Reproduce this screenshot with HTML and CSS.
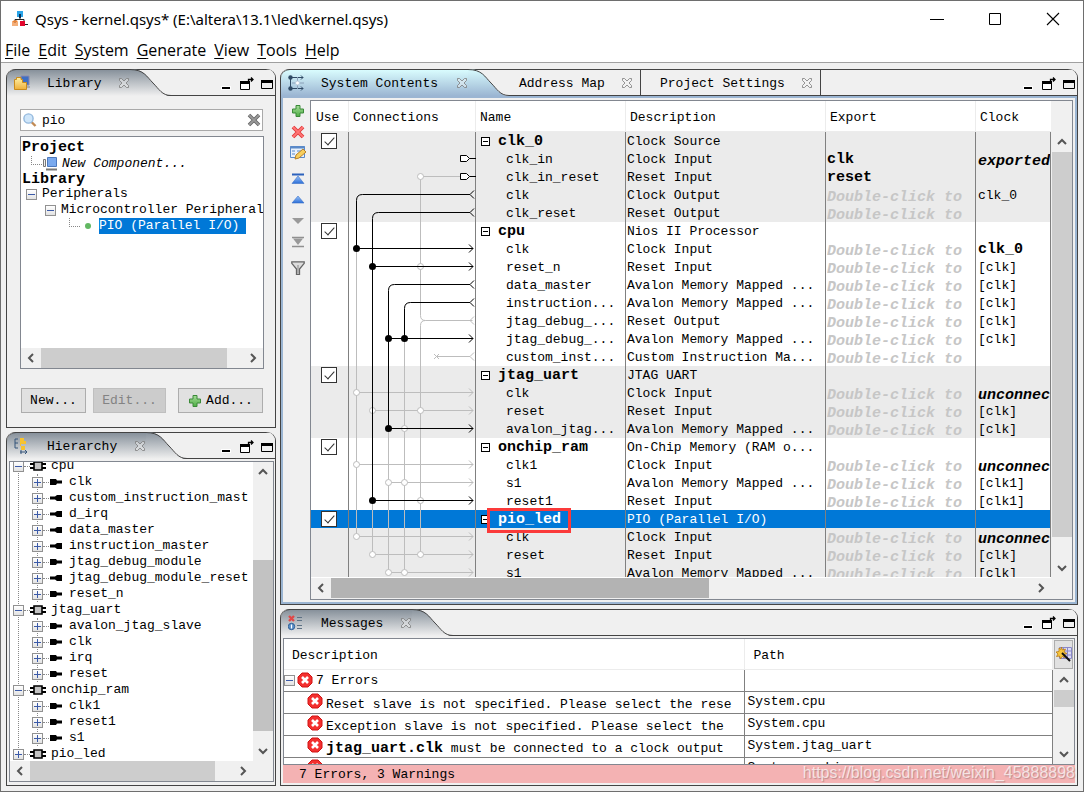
FILE: index.html
```html
<!DOCTYPE html>
<html lang="en">
<head>
<meta charset="utf-8">
<title>Qsys - kernel.qsys*</title>
<link rel="stylesheet" href="styles.css">
</head>
<body>
<svg class="defs" aria-hidden="true">
  <defs>
    <linearGradient id="gray" x1="0" y1="0" x2="0" y2="1"><stop offset="0" stop-color="#87919b"/><stop offset="1" stop-color="#f0f0f0"/></linearGradient>
    <linearGradient id="blue" x1="0" y1="0" x2="0" y2="1"><stop offset="0" stop-color="#d9fcfe"/><stop offset="1" stop-color="#9bb5d2"/></linearGradient>
    <linearGradient id="green" x1="0" y1="0" x2="0" y2="1"><stop offset="0" stop-color="#a5dc98"/><stop offset="1" stop-color="#4fae45"/></linearGradient>
    <linearGradient id="sky" x1="0" y1="0" x2="0" y2="1"><stop offset="0" stop-color="#9cc4f8"/><stop offset="1" stop-color="#2c6fd8"/></linearGradient>
    <linearGradient id="gold" x1="0" y1="0" x2="0" y2="1"><stop offset="0" stop-color="#fff2a8"/><stop offset="1" stop-color="#eeb03a"/></linearGradient>
    <symbol id="close" viewBox="0 0 12 12"><path d="M1.500 1.500h2L6 4 8.500 1.500h2v2L8 6l2.500 2.500v2h-2L6 8l-2.500 2.500h-2v-2L4 6 1.500 3.500z" fill="#f4f4f4" fill-opacity=".4" stroke="#7c7c7c" stroke-width=".8"/></symbol>
    <symbol id="min" viewBox="0 0 16 16"><path d="M2 10h10v4H2z" fill="#fff"/><path d="M3 11h8v2H3z" fill="#000"/></symbol>
    <symbol id="detach" viewBox="0 0 16 16"><path d="M1.500 5.500h9v8h-9z" fill="#fff" stroke="#000"/><path d="M1 6.500h10" stroke="#000" stroke-width="3"/><path d="M9.500 5V3.500H14M12 1.500l2 2-2 2" fill="none" stroke="#000" stroke-width="1.300"/></symbol>
    <symbol id="max" viewBox="0 0 16 16"><path d="M2.500 4.500h11v8h-11z" fill="#f0f0f0" stroke="#000"/><path d="M2 4h12v3H2z"/></symbol>
    <symbol id="left" viewBox="0 0 12 12"><path d="M8 2 4 6l4 4" fill="none" stroke="#555" stroke-width="2"/></symbol>
    <symbol id="right" viewBox="0 0 12 12"><path d="m4 2 4 4-4 4" fill="none" stroke="#555" stroke-width="2"/></symbol>
    <symbol id="up" viewBox="0 0 12 12"><path d="m2 8 4-4 4 4" fill="none" stroke="#555" stroke-width="2"/></symbol>
    <symbol id="down" viewBox="0 0 12 12"><path d="m2 4 4 4 4-4" fill="none" stroke="#555" stroke-width="2"/></symbol>
    <symbol id="plus" viewBox="0 0 14 14"><path d="M5 1.500h4V5h3.500v4H9v3.500H5V9H1.500V5H5z" fill="url(#green)" stroke="#3b8a38"/></symbol>
    <symbol id="error" viewBox="0 0 16 16"><path d="M5 1h6l4 4v6l-4 4H5l-4-4V5z" fill="#f3302f" stroke="#d01414"/><path d="m5 5 6 6M11 5l-6 6" stroke="#fff" stroke-width="2.600"/></symbol>
    <symbol id="chip" viewBox="0 0 16 12"><path d="M0 4h16M0 8h16" stroke="#000" stroke-width="2"/><path d="M4 2h8v8H4z" fill="#c4c4c4" stroke="#000" stroke-width="1.600"/></symbol>
    <symbol id="in" viewBox="0 0 12 8"><path d="M0 1h6l1 1.500h5v3H7L6 7H0z"/></symbol>
    <symbol id="out" viewBox="0 0 12 8"><path d="M12 1H7L5 2.500H0v3h5L7 7h5z"/></symbol>
    <symbol id="tail-gray" viewBox="0 0 41 27"><path d="M0 0C14 0 17 8 23 14S32 27 41 27H0z" fill="url(#gray)"/><path d="M0 .5C14 .5 17 8 23 14S32 26.500 41 26.500" fill="none" stroke="#444"/></symbol>
    <symbol id="tail-blue" viewBox="0 0 41 27"><path d="M0 0C14 0 17 8 23 14S32 27 41 27H0z" fill="url(#blue)"/><path d="M0 .5C14 .5 17 8 23 14S32 26.500 41 26.500" fill="none" stroke="#444"/></symbol>
  </defs>
</svg>

<div class="window">
  <header class="titlebar">
    <svg class="i16" viewBox="0 0 16 16"><path d="M8 5v4M3 12V8.500h9V12" fill="none" stroke="#222"/><path d="M5 0h6v6H5z" fill="#2aa4e8"/><path d="M7 3h2v4H7z" fill="#0b2f55"/><path d="M1 15v-5m0 1q2-2 2 0v4m0-4q2-2 2 0v4" fill="none" stroke="#ee8433" stroke-width="1.300"/><path d="M8 10h5v5H8z" fill="#e2062c"/><path d="M13 13.500h3" stroke="#222"/></svg>
    <h1>Qsys - kernel.qsys* (E:\altera\13.1\led\kernel.qsys)</h1>
    <div class="wincontrols">
      <button aria-label="Minimize"><svg viewBox="0 0 16 16"><path d="M1 8.500h14" stroke="#000"/></svg></button>
      <button aria-label="Maximize"><svg viewBox="0 0 16 16"><path d="M2.500 2.500h11v11h-11z" fill="none" stroke="#000"/></svg></button>
      <button aria-label="Close"><svg viewBox="0 0 16 16"><path d="m2 2 12 12M14 2 2 14" stroke="#000" stroke-width="1.100"/></svg></button>
    </div>
  </header>
  <nav class="menubar">
    <button><u>F</u>ile</button><button><u>E</u>dit</button><button><u>S</u>ystem</button><button><u>G</u>enerate</button><button><u>V</u>iew</button><button><u>T</u>ools</button><button><u>H</u>elp</button>
  </nav>

  <main class="workspace">
    <div class="side">
      <section class="panel library">
        <div class="tabs">
          <div class="tab tab-library">
            <svg class="i16" viewBox="0 0 16 16"><path d="M7 1h8v9H7z" fill="#3f6fc4" stroke="#88a"/><path d="M9 12h7" stroke="#888"/><path d="M.5 14.500v-10h2v-2H7v2h1.500v3h4v7z" fill="url(#gold)" stroke="#c98b1c"/></svg>
            <h2>Library</h2><button class="x" aria-label="Close Library"><svg><use href="#close"/></svg></button>
          </div>
          <svg class="tail"><use href="#tail-gray"/></svg>
          <div class="controls"><button aria-label="Minimize"><svg><use href="#min"/></svg></button><button aria-label="Detach"><svg><use href="#detach"/></svg></button><button aria-label="Maximize"><svg><use href="#max"/></svg></button></div>
        </div>
        <div class="library-body">
          <div class="search">
            <svg class="i14" viewBox="0 0 14 14"><path d="m8.500 9 4 4" stroke="#c18a54" stroke-width="2.400"/><circle cx="5.500" cy="5.500" r="4.600" fill="#cfe6fa" stroke="#93b8dd" stroke-width="1.400"/></svg>
            <input type="text" value="pio" aria-label="Search library">
            <button aria-label="Clear search"><svg class="i14" viewBox="0 0 14 14"><path d="m2 2 10 10M12 2 2 12" stroke="#666" stroke-width="3.600"/><path d="m2 2 10 10M12 2 2 12" stroke="#999" stroke-width="1.800"/></svg></button>
          </div>
          <div class="listbox">
            <ul class="lib-tree">
              <li class="strong">Project</li>
              <li class="lib-item lib-new"><span class="elbow"></span><svg class="i16" viewBox="0 0 16 16"><path d="M5.500 1.500h9v9h-9z" fill="#79a9ee" stroke="#4c78bd"/><path d="M1.500 3.500h2v7h-2z" fill="#eee" stroke="#777"/><path d="M4 13.500h11" stroke="#777" stroke-width="2"/></svg><em>New Component...</em></li>
              <li class="strong short">Library</li>
              <li class="lib-item lvl1"><button class="exp minus" aria-label="Collapse"></button><span>Peripherals</span></li>
              <li class="lib-item lvl2"><button class="exp minus" aria-label="Collapse"></button><span>Microcontroller Peripherals</span></li>
              <li class="lib-item lvl3"><span class="elbow"></span><span class="dot"></span><span class="selected">PIO (Parallel I/O)</span></li>
            </ul>
            <div class="hscroll"><button aria-label="Scroll left"><svg><use href="#left"/></svg></button><div class="track"><div class="thumb" style="width:92%"></div></div><button aria-label="Scroll right"><svg><use href="#right"/></svg></button></div>
          </div>
          <div class="actions">
            <button class="btn btn-new">New...</button><button class="btn btn-edit" disabled>Edit...</button><button class="btn btn-add"><svg class="i14"><use href="#plus"/></svg>Add...</button>
          </div>
        </div>
      </section>

      <section class="panel hierarchy">
        <div class="tabs">
          <div class="tab tab-hierarchy">
            <svg class="i16" viewBox="0 0 16 16"><path d="M4 1H1v9h3M1 5h3" fill="none" stroke="#34557a"/><path d="M6 0h4v3h2v3H7v2h4v4H7V8H6z" fill="#f7c32e"/><path d="M6 14h7M11 12l2 2-2 2M7 12v4" fill="none" stroke="#34557a"/></svg>
            <h2>Hierarchy</h2><button class="x" aria-label="Close Hierarchy"><svg><use href="#close"/></svg></button>
          </div>
          <svg class="tail"><use href="#tail-gray"/></svg>
          <div class="controls"><button aria-label="Minimize"><svg><use href="#min"/></svg></button><button aria-label="Detach"><svg><use href="#detach"/></svg></button><button aria-label="Maximize"><svg><use href="#max"/></svg></button></div>
        </div>
        <div class="tree-frame">
          <div class="tree-view">
            <ul class="tree">
              <li><div class="node"><button class="exp minus" aria-label="Collapse cpu"></button><svg class="chip"><use href="#chip"/></svg>cpu</div>
                <ul>
                  <li class="node"><button class="exp plus" aria-label="Expand"></button><svg class="port"><use href="#in"/></svg>clk</li>
                  <li class="node"><button class="exp plus" aria-label="Expand"></button><svg class="port"><use href="#out"/></svg>custom_instruction_mast</li>
                  <li class="node"><button class="exp plus" aria-label="Expand"></button><svg class="port"><use href="#out"/></svg>d_irq</li>
                  <li class="node"><button class="exp plus" aria-label="Expand"></button><svg class="port"><use href="#out"/></svg>data_master</li>
                  <li class="node"><button class="exp plus" aria-label="Expand"></button><svg class="port"><use href="#out"/></svg>instruction_master</li>
                  <li class="node"><button class="exp plus" aria-label="Expand"></button><svg class="port"><use href="#in"/></svg>jtag_debug_module</li>
                  <li class="node"><button class="exp plus" aria-label="Expand"></button><svg class="port"><use href="#out"/></svg>jtag_debug_module_reset</li>
                  <li class="node"><button class="exp plus" aria-label="Expand"></button><svg class="port"><use href="#in"/></svg>reset_n</li>
                </ul></li>
              <li><div class="node"><button class="exp minus" aria-label="Collapse jtag_uart"></button><svg class="chip"><use href="#chip"/></svg>jtag_uart</div>
                <ul>
                  <li class="node"><button class="exp plus" aria-label="Expand"></button><svg class="port"><use href="#in"/></svg>avalon_jtag_slave</li>
                  <li class="node"><button class="exp plus" aria-label="Expand"></button><svg class="port"><use href="#in"/></svg>clk</li>
                  <li class="node"><button class="exp plus" aria-label="Expand"></button><svg class="port"><use href="#in"/></svg>irq</li>
                  <li class="node"><button class="exp plus" aria-label="Expand"></button><svg class="port"><use href="#in"/></svg>reset</li>
                </ul></li>
              <li><div class="node"><button class="exp minus" aria-label="Collapse onchip_ram"></button><svg class="chip"><use href="#chip"/></svg>onchip_ram</div>
                <ul>
                  <li class="node"><button class="exp plus" aria-label="Expand"></button><svg class="port"><use href="#in"/></svg>clk1</li>
                  <li class="node"><button class="exp plus" aria-label="Expand"></button><svg class="port"><use href="#in"/></svg>reset1</li>
                  <li class="node"><button class="exp plus" aria-label="Expand"></button><svg class="port"><use href="#in"/></svg>s1</li>
                </ul></li>
              <li><div class="node"><button class="exp plus" aria-label="Expand pio_led"></button><svg class="chip"><use href="#chip"/></svg>pio_led</div></li>
            </ul>
          </div>
          <div class="vscroll"><button aria-label="Scroll up"><svg><use href="#up"/></svg></button><div class="track"><div class="thumb dark" style="margin-top:78px;height:66%"></div></div><button aria-label="Scroll down"><svg><use href="#down"/></svg></button></div>
          <div class="hscroll"><button aria-label="Scroll left"><svg><use href="#left"/></svg></button><div class="track"><div class="thumb" style="width:91%"></div></div><button aria-label="Scroll right"><svg><use href="#right"/></svg></button></div>
        </div>
      </section>
    </div>

    <div class="content">
      <section class="panel system">
        <div class="tabs">
          <div class="tab tab-system">
            <svg class="i16" viewBox="0 0 16 16"><path d="M2.500 2v12M2 2.500h13M2 13.500h13M13 .5l2 2-2 2M13 11.500l2 2-2 2" fill="none" stroke="#2f4a64"/><path d="M9.500 2v12M4 8h12" stroke="#8aa0b8"/><circle cx="2.500" cy="2.500" r="2.200" fill="#2f4a64"/><circle cx="2.500" cy="13.500" r="2.200" fill="#2f4a64"/><circle cx="9.500" cy="8" r="2" fill="#fff" stroke="#bcd"/></svg>
            <h2>System Contents</h2><button class="x" aria-label="Close System Contents"><svg><use href="#close"/></svg></button>
          </div>
          <svg class="tail"><use href="#tail-blue"/></svg>
          <div class="tab-idle tab-address"><h2>Address Map</h2><button class="x" aria-label="Close Address Map"><svg><use href="#close"/></svg></button></div>
          <div class="tab-idle tab-settings"><h2>Project Settings</h2><button class="x" aria-label="Close Project Settings"><svg><use href="#close"/></svg></button></div>
          <div class="controls"><button aria-label="Minimize"><svg><use href="#min"/></svg></button><button aria-label="Detach"><svg><use href="#detach"/></svg></button><button aria-label="Maximize"><svg><use href="#max"/></svg></button></div>
        </div>
        <div class="system-body">
          <div class="toolbar">
            <button aria-label="Add"><svg><use href="#plus"/></svg></button>
            <button aria-label="Remove"><svg viewBox="0 0 14 14"><path d="m2 2 10 10M12 2 2 12" stroke="#e03a3a" stroke-width="3.800"/><path d="m2 2 10 10M12 2 2 12" stroke="#ff7676" stroke-width="1.800"/></svg></button>
            <button aria-label="Edit"><svg class="wide" viewBox="0 0 16 16"><path d="M.5 1.500h14v11H.5z" fill="#e8f1fc" stroke="#5b8ac9"/><path d="M0 2.500h15" stroke="#5b8ac9" stroke-width="2"/><path d="M2 6h3M7 6h5M2 9h3" stroke="#5b8ac9"/><path d="m5 14 1-4 7-6 3 3-7 6z" fill="#f7cf5e" stroke="#b98127"/></svg></button>
            <span class="sep"></span>
            <button aria-label="Move to top"><svg viewBox="0 0 14 14"><path d="M1 2.500h12" stroke="#2c62bd" stroke-width="2"/><path d="m7 4 6 7.500H1z" fill="url(#sky)" stroke="#3a70c8" stroke-width=".6"/></svg></button>
            <button aria-label="Move up"><svg viewBox="0 0 14 14"><path d="m7 3 6 7H1z" fill="url(#sky)" stroke="#3a70c8" stroke-width=".6"/></svg></button>
            <button aria-label="Move down"><svg viewBox="0 0 14 14"><path d="m7 10 6-6H1z" fill="#9a9a9a"/></svg></button>
            <button aria-label="Move to bottom"><svg viewBox="0 0 14 14"><path d="M1 11.500h12M1 2.500h12" stroke="#909090" stroke-width="1.600"/><path d="m7 10 5-6.500H2z" fill="#999"/></svg></button>
            <span class="sep"></span>
            <button aria-label="Filter"><svg viewBox="0 0 14 14"><path d="M.8.8h12.400v1.500L8.500 8v5.500h-3V8L.8 2.300z" fill="#ddd" stroke="#666" stroke-width="1.300"/><path d="M7 4v8" stroke="#888"/></svg></button>
          </div>
          <div class="grid-frame">
            <div class="grid-view">
              <table class="grid">
                <colgroup><col class="c-use"><col class="c-conn"><col class="c-name"><col class="c-desc"><col class="c-exp"><col></colgroup>
                <thead><tr><th>Use</th><th>Connections</th><th>Name</th><th>Description</th><th>Export</th><th>Clock</th></tr></thead>
                <tbody>
                  <tr class="alt"><td class="use"><input type="checkbox" checked aria-label="Use clk_0"></td><td class="conn">
                    <svg class="wires" viewBox="349 132 128 446">
                      <g fill="none" stroke="#bdbdbd">
                        <path d="M356.500 248.500V536.500M372.500 500.500V554.500M388.500 428.500V572.500M404.500 338.500V572.500M420.500 176.500V315.500q0 5 5 5H472.500M425.500 320.500q-5 0-5 5V554.500M420.500 176.500H460"/>
                        <path d="M356.500 392.500H473M372.500 410.500H473M356.500 464.500H473M388.500 482.500H473M356.500 536.500H473M372.500 554.500H473M388.500 572.500H473M436.500 356.500H470"/>
                        <path d="m469 388.500 4 4-4 4m0 10 4 4-4 4m0 46 4 4-4 4m0 10 4 4-4 4m0 46 4 4-4 4m0 10 4 4-4 4m0 10 4 4-4 4M474 316.500l-4 4 4 4m0 28-4 4 4 4M434 354l5 5m0-5-5 5"/>
                      </g>
                      <g fill="none" stroke="#000">
                        <path d="M470 194.500H362.500q-6 0-6 6V248.500H473M470 212.500H378.500q-6 0-6 6V500.500H473M372.500 266.500H473M470 284.500H394.500q-6 0-6 6V428.500H473M388.500 338.500H473M470 302.500H410.500q-6 0-6 6V338.500"/>
                        <path d="M474 190.500l-4 4 4 4m0 10-4 4 4 4m0 64-4 4 4 4m0 10-4 4 4 4M469 244.500l4 4-4 4m0 10 4 4-4 4m0 64 4 4-4 4m0 82 4 4-4 4m0 64 4 4-4 4"/>
                        <path d="M460.500 155.500h6l3 3-3 3h-6zM469.500 158.500H476M460.500 173.500h6l3 3-3 3h-6zM469.500 176.500H476" fill="#fff"/>
                      </g>
                      <g fill="#000"><circle cx="356.500" cy="248.500" r="3.500"/><circle cx="372.500" cy="266.500" r="3.500"/><circle cx="388.500" cy="338.500" r="3.500"/><circle cx="404.500" cy="338.500" r="3.500"/><circle cx="388.500" cy="428.500" r="3.500"/><circle cx="372.500" cy="500.500" r="3.500"/></g>
                      <g fill="#fff" stroke="#bdbdbd"><circle cx="420.500" cy="176.500" r="3"/><circle cx="356.500" cy="392.500" r="3"/><circle cx="372.500" cy="410.500" r="3"/><circle cx="420.500" cy="410.500" r="3"/><circle cx="356.500" cy="464.500" r="3"/><circle cx="388.500" cy="482.500" r="3"/><circle cx="404.500" cy="482.500" r="3"/><circle cx="356.500" cy="536.500" r="3"/><circle cx="372.500" cy="554.500" r="3"/><circle cx="420.500" cy="554.500" r="3"/><circle cx="388.500" cy="572.500" r="3"/><circle cx="404.500" cy="572.500" r="3"/><circle cx="420.500" cy="266.500" r="3"/><circle cx="404.500" cy="428.500" r="3"/><circle cx="420.500" cy="500.500" r="3"/></g>
                      <path d="M417 266.500h7M401 428.500h7M417 500.500h7M372.500 405v11" stroke="#000"/>
                    </svg></td><td class="mod"><button class="fold" aria-label="Collapse clk_0"></button>clk_0</td><td>Clock Source</td><td></td><td></td></tr>
                  <tr class="alt"><td></td><td></td><td class="sub">clk_in</td><td>Clock Input</td><td class="set">clk</td><td class="lowcell"><div class="low">exported</div></td></tr>
                  <tr class="alt"><td></td><td></td><td class="sub">clk_in_reset</td><td>Reset Input</td><td class="set">reset</td><td></td></tr>
                  <tr class="alt"><td></td><td></td><td class="sub">clk</td><td>Clock Output</td><td class="lowcell"><div class="low hint">Double-click to</div></td><td>clk_0</td></tr>
                  <tr class="alt"><td></td><td></td><td class="sub">clk_reset</td><td>Reset Output</td><td class="lowcell"><div class="low hint">Double-click to</div></td><td></td></tr>
                  <tr><td class="use"><input type="checkbox" checked aria-label="Use cpu"></td><td></td><td class="mod"><button class="fold" aria-label="Collapse cpu"></button>cpu</td><td>Nios II Processor</td><td></td><td></td></tr>
                  <tr><td></td><td></td><td class="sub">clk</td><td>Clock Input</td><td class="lowcell"><div class="low hint">Double-click to</div></td><td class="set">clk_0</td></tr>
                  <tr><td></td><td></td><td class="sub">reset_n</td><td>Reset Input</td><td class="lowcell"><div class="low hint">Double-click to</div></td><td>[clk]</td></tr>
                  <tr><td></td><td></td><td class="sub">data_master</td><td>Avalon Memory Mapped ...</td><td class="lowcell"><div class="low hint">Double-click to</div></td><td>[clk]</td></tr>
                  <tr><td></td><td></td><td class="sub">instruction...</td><td>Avalon Memory Mapped ...</td><td class="lowcell"><div class="low hint">Double-click to</div></td><td>[clk]</td></tr>
                  <tr><td></td><td></td><td class="sub">jtag_debug_...</td><td>Reset Output</td><td class="lowcell"><div class="low hint">Double-click to</div></td><td>[clk]</td></tr>
                  <tr><td></td><td></td><td class="sub">jtag_debug_...</td><td>Avalon Memory Mapped ...</td><td class="lowcell"><div class="low hint">Double-click to</div></td><td>[clk]</td></tr>
                  <tr><td></td><td></td><td class="sub">custom_inst...</td><td>Custom Instruction Ma...</td><td class="lowcell"><div class="low hint">Double-click to</div></td><td></td></tr>
                  <tr class="alt"><td class="use"><input type="checkbox" checked aria-label="Use jtag_uart"></td><td></td><td class="mod"><button class="fold" aria-label="Collapse jtag_uart"></button>jtag_uart</td><td>JTAG UART</td><td></td><td></td></tr>
                  <tr class="alt"><td></td><td></td><td class="sub">clk</td><td>Clock Input</td><td class="lowcell"><div class="low hint">Double-click to</div></td><td class="lowcell"><div class="low">unconnec</div></td></tr>
                  <tr class="alt"><td></td><td></td><td class="sub">reset</td><td>Reset Input</td><td class="lowcell"><div class="low hint">Double-click to</div></td><td>[clk]</td></tr>
                  <tr class="alt"><td></td><td></td><td class="sub">avalon_jtag...</td><td>Avalon Memory Mapped ...</td><td class="lowcell"><div class="low hint">Double-click to</div></td><td>[clk]</td></tr>
                  <tr><td class="use"><input type="checkbox" checked aria-label="Use onchip_ram"></td><td></td><td class="mod"><button class="fold" aria-label="Collapse onchip_ram"></button>onchip_ram</td><td>On-Chip Memory (RAM o...</td><td></td><td></td></tr>
                  <tr><td></td><td></td><td class="sub">clk1</td><td>Clock Input</td><td class="lowcell"><div class="low hint">Double-click to</div></td><td class="lowcell"><div class="low">unconnec</div></td></tr>
                  <tr><td></td><td></td><td class="sub">s1</td><td>Avalon Memory Mapped ...</td><td class="lowcell"><div class="low hint">Double-click to</div></td><td>[clk1]</td></tr>
                  <tr><td></td><td></td><td class="sub">reset1</td><td>Reset Input</td><td class="lowcell"><div class="low hint">Double-click to</div></td><td>[clk1]</td></tr>
                  <tr class="active"><td class="use"><input type="checkbox" checked aria-label="Use pio_led"></td><td></td><td class="mod marked"><button class="fold" aria-label="Collapse pio_led"></button>pio_led<span class="marker"></span></td><td>PIO (Parallel I/O)</td><td></td><td></td></tr>
                  <tr class="alt"><td></td><td></td><td class="sub">clk</td><td>Clock Input</td><td class="lowcell"><div class="low hint">Double-click to</div></td><td class="lowcell"><div class="low">unconnec</div></td></tr>
                  <tr class="alt"><td></td><td></td><td class="sub">reset</td><td>Reset Input</td><td class="lowcell"><div class="low hint">Double-click to</div></td><td>[clk]</td></tr>
                  <tr class="alt"><td></td><td></td><td class="sub">s1</td><td>Avalon Memory Mapped ...</td><td class="lowcell"><div class="low hint">Double-click to</div></td><td>[clk]</td></tr>
                </tbody>
              </table>
            </div>
            <div class="vscroll"><button aria-label="Scroll up"><svg><use href="#up"/></svg></button><div class="track"><div class="thumb" style="height:95%"></div></div><button aria-label="Scroll down"><svg><use href="#down"/></svg></button></div>
            <div class="hscroll"><button aria-label="Scroll left"><svg><use href="#left"/></svg></button><div class="track"><div class="thumb darker" style="width:54%"></div></div><button aria-label="Scroll right"><svg><use href="#right"/></svg></button></div>
          </div>
        </div>
      </section>

      <section class="panel messages">
        <div class="tabs">
          <div class="tab tab-messages">
            <svg class="i16" viewBox="0 0 16 16"><path d="m1 1 5 5M6 1 1 6" stroke="#e04848" stroke-width="2.400"/><circle cx="3.500" cy="11.500" r="3.200" fill="#5c90c8" stroke="#2f5f96"/><path d="M3.500 9.500v4" stroke="#fff" stroke-width="1.200"/><path d="M9 2.500h5M9 5.500h5M9 10.500h5M9 13.500h5" stroke="#5d7184"/></svg>
            <h2>Messages</h2><button class="x" aria-label="Close Messages"><svg><use href="#close"/></svg></button>
          </div>
          <svg class="tail"><use href="#tail-gray"/></svg>
          <div class="controls"><button aria-label="Minimize"><svg><use href="#min"/></svg></button><button aria-label="Detach"><svg><use href="#detach"/></svg></button><button aria-label="Maximize"><svg><use href="#max"/></svg></button></div>
        </div>
        <div class="messages-body">
          <div class="msg-frame">
            <div class="msg-view">
              <table class="msgs">
                <colgroup><col class="m-desc"><col></colgroup>
                <thead><tr><th>Description</th><th>Path</th></tr></thead>
                <tbody>
                  <tr><td><div class="msg root"><button class="exp minus" aria-label="Collapse errors"></button><svg class="i16"><use href="#error"/></svg><span>7 Errors</span></div></td><td></td></tr>
                  <tr><td><div class="msg leaf"><svg class="i16"><use href="#error"/></svg><span>Reset slave is not specified. Please select the rese</span></div></td><td>System.cpu</td></tr>
                  <tr><td><div class="msg leaf"><svg class="i16"><use href="#error"/></svg><span>Exception slave is not specified. Please select the</span></div></td><td>System.cpu</td></tr>
                  <tr><td><div class="msg leaf"><svg class="i16"><use href="#error"/></svg><span><b>jtag_uart.clk</b> must be connected to a clock output</span></div></td><td>System.jtag_uart</td></tr>
                  <tr><td><div class="msg leaf"><svg class="i16"><use href="#error"/></svg><span></span></div></td><td>System.onchip_ram</td></tr>
                </tbody>
              </table>
            </div>
            <div class="msg-side">
              <button class="wizard" aria-label="Column settings"><svg class="i16" viewBox="0 0 16 16"><path d="M3.500 1.500h12v11h-12zM3.500 5h12M3.500 9h12M7.500 1.500v11M11.500 1.500v11" fill="#dcdcf6" stroke="#8a88c8"/><path d="m5.500 1 1 3 3-1-1.500 3 3 1.500-3 1 1 3-3-1-1.500 2.500-1-3-3 .5L2 8 0 6l3-.5L3 2l2 1.500z" fill="#f8c63c" stroke="#b87a12" stroke-width=".8"/><path d="m6 7 8 8" stroke="#111" stroke-width="2"/></svg></button>
              <div class="vscroll"><button aria-label="Scroll up"><svg><use href="#up"/></svg></button><div class="track"><div class="thumb" style="height:33%"></div></div><button aria-label="Scroll down"><svg><use href="#down"/></svg></button></div>
            </div>
          </div>
          <footer class="status">7 Errors, 3 Warnings<span class="watermark">https://blog.csdn.net/weixin_45888898</span></footer>
        </div>
      </section>
    </div>
  </main>
</div>
</body>
</html>
```

FILE: styles.css
```css
* { box-sizing: border-box; }
body {
  margin: 0;
  background: #f0f0f0;
  color: #000;
  font: 13px/16px "Liberation Mono", monospace;
}
button { margin: 0; padding: 0; border: 0; background: none; color: inherit; font: inherit; }
h1, h2, ul { margin: 0; padding: 0; font-weight: normal; list-style: none; }
svg { display: block; flex: none; }
.defs { position: absolute; width: 0; height: 0; }
.i16 { width: 16px; height: 16px; }
.i14 { width: 14px; height: 14px; }

.window {
  display: flex;
  flex-direction: column;
  height: 100vh;
  min-height: 600px;
  border: 1px solid #6e6e6e;
  overflow: hidden;
}

/* Title bar and menu */
.titlebar { display: flex; align-items: center; height: 36px; padding-left: 11px; background: #fff; }
.titlebar h1 { flex: 1; padding-left: 7px; font: 15px/20px "Noto Sans", "Open Sans", sans-serif; }
.wincontrols { display: flex; padding-right: 1px; }
.wincontrols button { display: grid; place-items: center; width: 58px; height: 36px; }
.wincontrols svg { width: 16px; height: 16px; }
.menubar { display: flex; gap: 8px; height: 26px; padding: 2px 4px 0; background: #fff; border-bottom: 1px solid #a0a0a0; font: 16px/22px "Open Sans", sans-serif; }
.menubar button { height: 22px; }
.menubar u { text-underline-offset: 2px; }

/* Panels */
.workspace { flex: 1; display: flex; gap: 4px; min-height: 0; padding: 6px 5px 5px; }
.side, .content { display: flex; flex-direction: column; gap: 4px; min-width: 0; min-height: 0; }
.side { flex: 270 1 0; }
.content { flex: 798 1 0; }
.panel { display: flex; flex-direction: column; min-height: 0; border: 1px solid #444; border-top: 0; border-radius: 9px 9px 0 0; }
.library { flex: 359 1 0; }
.hierarchy { flex: 354 1 0; }
.system { flex: 536 1 0; }
.messages { flex: 177 1 0; }

.tabs {
  display: flex;
  flex: none;
  height: 27px;
  border-radius: 9px 9px 0 0;
  background: linear-gradient(#444, #444) bottom / 100% 1px no-repeat, linear-gradient(#444, #444) top / 100% 1px no-repeat, #f0f0f0;
}
.tab { display: flex; align-items: center; padding-left: 7px; border-top: 1px solid #444; border-radius: 9px 0 0 0; background: linear-gradient(#87919b, #f0f0f0); }
.tab h2 { flex: 1; padding: 2px 0 0 17px; font-size: 13px; white-space: nowrap; }
.tab-system { background: linear-gradient(#d9fcfe, #9bb5d2); }
.tab-library { width: 123px; }
.tab-hierarchy { width: 139px; }
.tab-system { width: 187px; }
.tab-messages { width: 131px; }
.tail { width: 41px; height: 27px; }
.x svg { width: 12px; height: 12px; }
.tab-idle { display: flex; align-items: center; border-right: 1px solid #444; padding-right: 7px; }
.tab-idle h2 { flex: 1; padding-top: 2px; font-size: 13px; white-space: nowrap; }
.tab-address { width: 132px; padding-left: 10px; }
.tab-settings { width: 180px; padding-left: 19px; }
.controls { display: flex; align-items: center; margin-left: auto; padding-top: 2px; }
.controls button { width: 20px; }
.controls svg { width: 16px; height: 16px; margin-left: 4px; }

/* Scroll bars */
.hscroll { display: flex; height: 20px; background: #f0f0f0; }
.vscroll { display: flex; flex-direction: column; width: 20px; background: #f0f0f0; min-height: 0; }
.hscroll button, .vscroll button { display: grid; place-items: center; flex: none; width: 20px; height: 20px; }
.hscroll svg, .vscroll svg { width: 12px; height: 12px; }
.track { flex: 1; min-width: 0; min-height: 0; }
.thumb { height: 100%; background: #cdcdcd; }
.vscroll .thumb { width: 100%; }
.thumb.dark { background: #c2c2c2; }
.thumb.darker { background: #b3b3b3; }

/* Library */
.library-body { flex: 1; display: flex; flex-direction: column; min-height: 0; padding: 13px 11px 14px 13px; }
.search { display: flex; align-items: center; height: 22px; margin-right: 1px; padding: 0 1px 0 2px; border: 1px solid #a9a9a9; background: #fff; }
.search input { flex: 1; min-width: 0; height: 18px; padding: 0 0 0 5px; border: 0; outline: 0; background: none; font: inherit; }
.listbox { flex: 1; display: flex; flex-direction: column; min-height: 0; margin-top: 5px; border: 1px solid #828790; background: #fff; }
.lib-tree { flex: 1; overflow: hidden; padding: 3px 0 0 1px; white-space: nowrap; }
.lib-tree li { height: 16px; }
.strong { font-size: 15px; font-weight: bold; }
.lib-tree .short { height: 14px; overflow: hidden; }
.lib-item { display: flex; align-items: center; }
.lib-new { padding-left: 9px; }
.lib-item em { padding-left: 4px; }
.elbow { flex: none; align-self: flex-start; width: 11px; height: 9px; border: 1px dotted #888; border-width: 0 0 1px 1px; }
.lvl1 { padding-left: 4px; }
.lvl2 { padding-left: 23px; }
.lvl3 { padding-left: 47px; }
.lvl1 span, .lvl2 span { padding-left: 5px; }
.dot { width: 6px; height: 6px; margin: 0 8px 0 5px; border-radius: 50%; background: #62b862; }
.selected { padding-right: 7px; background: #0078d7; color: #fff; }
.actions { display: flex; justify-content: space-between; margin-top: 19px; padding: 0 1px; }
.btn { display: flex; align-items: center; justify-content: center; gap: 4px; height: 25px; border: 1px solid #adadad; background: #e1e1e1; }
.btn:disabled { background: #ccc; border-color: #bfbfbf; color: #838383; }
.btn-new { width: 65px; }
.btn-edit { width: 73px; margin-right: 5px; }
.btn-add { width: 85px; }
.exp {
  position: relative;
  z-index: 1;
  flex: none;
  width: 11px;
  height: 11px;
  border: 1px solid #919191;
  background: linear-gradient(#3b5aa8, #3b5aa8) center / 7px 1px no-repeat, linear-gradient(#fff, #e2e2e2);
}
.exp.plus { background: linear-gradient(#3b5aa8, #3b5aa8) center / 7px 1px no-repeat, linear-gradient(#3b5aa8, #3b5aa8) center / 1px 7px no-repeat, linear-gradient(#fff, #e2e2e2); }

/* Hierarchy */
.tree-frame { flex: 1; display: grid; grid-template: minmax(0, 1fr) 20px / minmax(0, 1fr) 20px; min-height: 0; margin: 2px 1px 3px 2px; border: 1px solid #828790; background: #f0f0f0; }
.tree-view { overflow: hidden; padding-left: 3px; background: #fff; white-space: nowrap; }
.tree { position: relative; margin-top: -4px; }
.tree::before, .tree ul::before { content: ""; position: absolute; top: 0; bottom: 8px; left: 5px; border-left: 1px dotted #888; }
.tree ul { position: relative; padding-left: 19px; }
.tree ul::before { left: 24px; bottom: 0; }
.node { display: flex; align-items: center; height: 16px; }
.node .exp::after { content: ""; position: absolute; top: 4px; left: 10px; width: 6px; border-top: 1px dotted #888; }
.chip { width: 16px; height: 12px; margin: 0 5px 0 6px; }
.port { width: 12px; height: 8px; margin: 0 7px; }

/* System contents */
.system-body { flex: 1; display: flex; min-height: 0; padding: 2px 2px 2px 0; border: 2px solid #9bb5d2; }
.system .tabs { background: linear-gradient(#444, #444) 228px 100% / 100% 1px no-repeat, linear-gradient(#444, #444) top / 100% 1px no-repeat, #f0f0f0; }
.toolbar { display: flex; flex-direction: column; flex: none; width: 27px; align-items: center; padding-left: 3px; }
.toolbar button { display: grid; place-items: center; width: 24px; height: 21px; }
.toolbar svg { width: 14px; height: 14px; }
.toolbar .wide { width: 16px; height: 16px; }
.sep { height: 5px; }
.grid-frame { flex: 1; display: grid; grid-template: 31px minmax(0, 1fr) 21px / minmax(0, 1fr) 21px; min-width: 0; border: 1px solid #828790; }
.grid-view { grid-row: 1 / 3; overflow: hidden; background: #fff; border-bottom: 1px solid #fff; }
.grid-frame .vscroll { grid-row: 2; grid-column: 2; width: 20px; margin-left: 1px; }
.grid-frame .hscroll { grid-row: 3; }
.grid, .msgs { width: 100%; table-layout: fixed; border-collapse: separate; border-spacing: 0; }
.c-use { width: 37px; }
.c-conn { width: 127px; }
.c-name { width: 150px; }
.c-desc { width: 200px; }
.c-exp { width: 150px; }
.grid th { height: 31px; padding: 4px 0 0 4px; border: solid #ececec; border-width: 0 0 1px 1px; font-weight: normal; text-align: left; }
.grid th:first-child { border-left: 0; padding-left: 5px; }
.grid td { height: 18px; padding: 2px 0 0 1px; border-left: 1px solid #808080; line-height: 16px; white-space: nowrap; overflow: hidden; }
.grid td:first-child { border-left: 0; }
.grid td:last-child { border-right: 1px solid #808080; padding-left: 2px; }
.grid td.conn, .grid td.marked { position: relative; overflow: visible; }
.grid td.lowcell { padding-top: 0; }
.alt td { background: #ebebeb; }
.active td { background: #0078d7; color: #fff; }
.grid td.sub { padding-left: 30px; }
.mod, .set { font-size: 15px; font-weight: bold; }
.fold { display: inline-block; width: 9px; height: 9px; margin: 0 8px 0 4px; border: 1px solid #000; background: linear-gradient(#000, #000) center / 5px 1px no-repeat, #fff; }
.low { height: 18px; overflow: hidden; font-size: 15px; font-weight: bold; font-style: italic; line-height: 23px; }
.hint { color: #c6c6c6; }
.grid td.use { padding-top: 0; }
.use input { appearance: none; display: block; position: relative; width: 16px; height: 16px; margin: 0 0 0 9px; border: 1px solid #333; background: #fff; }
.use input::after { content: ""; position: absolute; top: 1px; left: 5px; width: 4px; height: 9px; border: solid #333; border-width: 0 1px 1px 0; transform: rotate(42deg); }
.wires { position: absolute; z-index: 1; top: 0; left: 0; width: 128px; height: 446px; pointer-events: none; }
.marker { position: absolute; z-index: 2; top: -2px; left: 11px; width: 84px; height: 25px; border: 3px solid #fb3a3a; }

/* Messages */
.messages-body { flex: 1; display: flex; flex-direction: column; min-height: 0; padding: 2px 2px 2px; }
.msg-frame { flex: 1; display: flex; min-height: 0; border: 1px solid #828790; }
.msg-view { flex: 1; min-width: 0; overflow: hidden; background: #fff; }
.m-desc { width: 60%; }
.msgs th { height: 31px; padding: 4px 0 0 8px; border: solid #ececec; border-width: 0 1px 1px 0; font-weight: normal; text-align: left; }
.msgs td { height: 22px; padding: 0 0 0 2px; border: solid #808080; border-width: 0 1px 1px 0; white-space: nowrap; overflow: hidden; }
.msgs td:first-child { padding: 0; }
.msg { display: flex; align-items: center; height: 21px; overflow: hidden; }
.root { gap: 2px; }
.root span { padding: 2px 0 0 1px; }
.leaf { padding-left: 23px; gap: 3px; }
.leaf .i16 { margin-bottom: 2px; }
.leaf span { padding-top: 5px; }
.leaf b { font-size: 15px; }
.msg-side { display: flex; flex-direction: column; width: 21px; padding-left: 1px; background: #f0f0f0; }
.wizard { display: grid; place-items: center; flex: none; width: 19px; height: 29px; margin: 1px 0; border: 1px solid #adadad; background: #e1e1e1; }
.msg-side .vscroll { flex: 1; }
.status { position: relative; flex: none; height: 18px; padding: 1px 16px; background: #f4b2b3; line-height: 17px; }
.watermark { position: absolute; right: 0; top: 0; color: rgba(255, 255, 255, .7); font: 16px/16px "Liberation Sans", Arial, sans-serif; text-shadow: 1px 1px 1px rgba(120, 90, 90, .45); }
```
